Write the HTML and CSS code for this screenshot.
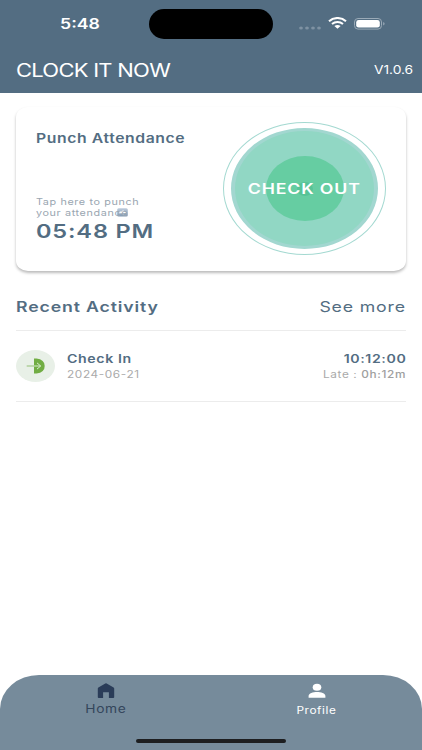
FILE: index.html
```html
<!DOCTYPE html>
<html lang="en">
<head>
<meta charset="utf-8">
<meta name="viewport" content="width=device-width, initial-scale=1">
<title>Clock It Now</title>
<link rel="stylesheet" href="styles.css">
</head>
<body>
<div class="app">
  <header class="header">
    <div class="status">
      <span class="t clock">5:48</span>
      <div class="island"></div>
      <div class="indicators">
        <svg class="cell" width="22" height="4" viewBox="0 0 22 4"><g fill="#7f92a3"><ellipse cx="2" cy="2" rx="1.9" ry="1.6"/><ellipse cx="8" cy="2" rx="1.9" ry="1.6"/><ellipse cx="14" cy="2" rx="1.9" ry="1.6"/><ellipse cx="20" cy="2" rx="1.9" ry="1.6"/></g></svg>
        <svg class="wifi" width="19" height="12" viewBox="0 0 19 12"><g fill="none" stroke="#fff" stroke-width="2"><path d="M1 4.2C5.6-.1 13.400-.1 18 4.200"/><path d="M4 7C7.200 4.300 11.800 4.300 15 7"/></g><path d="M6.400 9.100Q9.500 6.700 12.600 9.100L9.500 11.700Z" fill="#fff"/></svg>
        <svg class="battery" width="31" height="12" viewBox="0 0 31 12"><rect x=".5" y=".5" width="27" height="10.600" rx="3.500" fill="none" stroke="#9aaab7"/><rect x="2.200" y="2" width="23.600" height="7.600" rx="2.400" fill="#fff"/><path d="M29.200 4q1.400.5 1.400 1.800t-1.400 1.800Z" fill="#9aaab7"/></svg>
      </div>
    </div>
    <div class="titlebar">
      <h1 class="t title">CLOCK IT NOW</h1>
      <span class="t right version">V1.0.6</span>
    </div>
  </header>

  <main class="content">
    <section class="card">
      <div class="punch">
        <h2 class="t heading">Punch Attendance</h2>
        <p class="t hint">Tap here to punch</p>
        <div class="hint-row">
          <p class="t hint attendance">your attendance</p>
          <svg width="11" height="9" viewBox="0 0 11 9"><defs><linearGradient id="key" x2="0" y2="1"><stop stop-color="#bccbdc"/><stop offset="1" stop-color="#8299b2"/></linearGradient></defs><rect x=".2" y=".3" width="10.600" height="8.200" rx="1.500" fill="url(#key)"/><path d="M2 3.600h3.600V2l3.600 2.400-3.600 2.400V5.200H2Z" fill="#fff"/></svg>
        </div>
        <p class="t time">05:48 PM</p>
      </div>
      <button class="checkout">
        <span class="disc"><span class="core"><span class="dot"></span></span></span>
        <span class="t label">CHECK OUT</span>
      </button>
    </section>

    <div class="section-head">
      <h2 class="t recent">Recent Activity</h2>
      <a class="t right more">See more</a>
    </div>

    <article class="entry">
      <div class="badge">
        <svg width="20" height="16" viewBox="0 0 20 16"><path d="M8 .5h2.500Q18.700 1.500 18.700 8T10.500 15.500H8Z" fill="#71ad43"/><path d="M.7 8H8" stroke="#93bf75" stroke-width="1"/><path d="M8 8h6.500M11 4.900 14.700 8 11 11.100" fill="none" stroke="#d9ecd0" stroke-width="1"/></svg>
      </div>
      <div class="info">
        <h3 class="t check">Check In</h3>
        <p class="t date">2024-06-21</p>
      </div>
      <div class="result">
        <p class="t right stamp">10:12:00</p>
        <p class="t right late">Late : <b>0h:12m</b></p>
      </div>
    </article>
  </main>

  <nav class="tabs">
    <a class="tab">
      <svg width="18" height="16" viewBox="0 0 18 16"><path d="M.8 5.400Q.8 4.800 1.400 4.400L8.300.5Q9 .1 9.700.5L16.600 4.400q.6.400.6 1V14.300q0 .8-.9.800H11.900V9.200H6.100v5.900H1.700q-.9 0-.9-.8Z" fill="#2a3c58"/></svg>
      <span class="t mid home">Home</span>
    </a>
    <a class="tab">
      <svg width="18" height="16" viewBox="0 0 18 16"><ellipse cx="9" cy="4.300" rx="4.300" ry="3.500" fill="#fff"/><path d="M.6 14.700V13C.6 10.500 5 9.100 9 9.100s8.400 1.400 8.400 3.900v1.700Z" fill="#fff"/></svg>
      <span class="t mid profile">Profile</span>
    </a>
    <div class="indicator"></div>
  </nav>
</div>
</body>
</html>
```
FILE: styles.css
```css
* { box-sizing: border-box; }
body, h1, h2, h3, p { margin: 0; }
body { background: #fff; font-family: Inter, "Liberation Sans", sans-serif; color: #536d82; }
.app { width: 422px; height: 750px; display: flex; flex-direction: column; overflow: hidden; background: #fff; }

/* Wide lettering: every label is stretched horizontally */
.t { display: block; width: max-content; white-space: nowrap; transform: scaleX(1.22); transform-origin: left center; }
.right { transform-origin: right center; }
.mid { transform-origin: center; }

.header { height: 93px; background: #536d82; color: #fff; flex: none; }
.status { height: 48px; display: grid; grid-template-columns: 149px 124px 1fr; align-items: start; }
.clock { margin: 14px 0 0 60px; font-size: 14.500px; line-height: 20px; font-weight: 600; }
.island { margin-top: 9px; height: 30px; border-radius: 15px / 15px; background: #000; }
.indicators { display: flex; padding: 17px 0 0 26px; align-items: flex-start; }
.cell { margin-top: 8.500px; }
.wifi { margin-left: 7px; }
.battery { margin-left: 7px; margin-top: .5px; }
.titlebar { height: 45px; padding: 0 9px 0 16px; display: flex; justify-content: space-between; align-items: flex-start; }
.title { margin-top: 12px; font-size: 18px; line-height: 21px; font-weight: 400; letter-spacing: -.6px; }
.version { margin-top: 12px; font-size: 11.300px; line-height: 21px; }

.content { flex: 1; padding: 14px 16px 0; }
.card { height: 157px; height: 164px; border-radius: 12px / 10px; background: #fff; box-shadow: 0 2px 3px rgba(0,0,0,.27); display: flex; justify-content: space-between; padding: 15px 20px 0; }
.punch { padding-top: 9px; }
.heading { font-size: 12.900px; line-height: 16px; font-weight: 600; letter-spacing: .5px; margin-bottom: 49px; }
.hint { font-size: 8.900px; line-height: 11px; color: #9aa6b1; letter-spacing: .5px; }
.hint-row { display: flex; align-items: center; width: 92px; justify-content: space-between; }
.time { margin-top: 3px; font-size: 19.300px; line-height: 20px; font-weight: 600; letter-spacing: .7px; }
.checkout { width: 163px; height: 133px; padding: 0; border: 1px solid #a4d9d1; border-radius: 50%; background: #fff; display: grid; place-items: center; font-family: inherit; color: #fff; }
.checkout > * { grid-area: 1 / 1; }
.disc { width: 147px; height: 121px; border: solid #a2d7d0; border-width: 3px 4px; border-radius: 50%; background: #91d7c4; display: grid; place-items: center; }
.core { width: 78px; height: 65px; border-radius: 50%; background: #66cda2; display: grid; place-items: center; }
.dot { width: 16px; height: 14px; border-radius: 50%; background: #57c397; }
.label { transform-origin: center; font-size: 14.500px; line-height: 18px; font-weight: 600; letter-spacing: .7px; z-index: 1; }

.section-head { height: 60px; border-bottom: 1px solid #ececec; display: flex; justify-content: space-between; align-items: flex-start; padding-top: 26px; }
.recent, .more { font-size: 14.500px; line-height: 20px; }
.recent { font-weight: 600; letter-spacing: .7px; }
.more { letter-spacing: .7px; }
.entry { height: 71px; border-bottom: 1px solid #ececec; display: flex; align-items: flex-start; padding-top: 19px; }
.badge { width: 39px; height: 32px; border-radius: 50%; background: #e8f0e7; display: grid; place-items: center; }
.info { margin-left: 12px; padding-top: 1px; }
.check, .stamp { font-size: 11.600px; line-height: 17px; font-weight: 600; letter-spacing: .5px; }
.date, .late { font-size: 9.700px; line-height: 14px; letter-spacing: .5px; color: #aaa; }
.late b { font-weight: 500; color: #a0a0a0; }
.result { margin-left: auto; padding-top: 1px; display: flex; flex-direction: column; align-items: flex-end; }

.tabs { position: relative; height: 75px; flex: none; display: grid; grid-template-columns: 1fr 1fr; background: #768b9b; border-radius: 39px 39px 0 0 / 34px 34px 0 0; }
.tab { display: flex; flex-direction: column; align-items: center; padding-top: 8px; }
.home { margin-top: 3px; font-size: 11.300px; line-height: 15px; color: #34465b; letter-spacing: .5px; }
.profile { margin-top: 4px; font-size: 9.700px; line-height: 15px; color: #fff; letter-spacing: .5px; }
.indicator { position: absolute; left: 136px; bottom: 7px; width: 150px; height: 4px; border-radius: 2px; background: #1d1e20; }
```
